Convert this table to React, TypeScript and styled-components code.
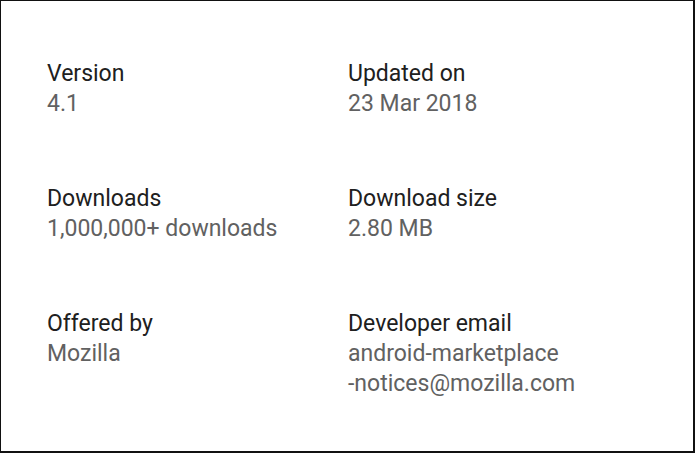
import React from "react";
import styled, { createGlobalStyle } from "styled-components";

const Global = createGlobalStyle`
  html, body { margin: 0; padding: 0; background: #ffffff; }
  body { font-family: Roboto, "Noto Sans", sans-serif; }
`;

const Frame = styled.div`
  box-sizing: border-box;
  width: 695px;
  height: 453px;
  border-style: solid;
  border-color: #111;
  border-width: 1px 2px 2px 1px;
  background: #fff;
  padding: 58px 0 0 46px;
`;

const Grid = styled.div`
  display: grid;
  grid-template-columns: 301px 1fr;
  row-gap: 65px;
`;

const Item = styled.div`
  display: flex;
  flex-direction: column;
`;

const Label = styled.div`
  font-size: 23px;
  line-height: 30px;
  color: #202020;
`;

const Value = styled.div`
  font-size: 23px;
  line-height: 30px;
  color: #616161;
`;

const items: { label: string; value: string[] }[] = [
  { label: "Version", value: ["4.1"] },
  { label: "Updated on", value: ["23 Mar 2018"] },
  { label: "Downloads", value: ["1,000,000+ downloads"] },
  { label: "Download size", value: ["2.80 MB"] },
  { label: "Offered by", value: ["Mozilla"] },
  { label: "Developer email", value: ["android-marketplace", "-notices@mozilla.com"] },
];

export default function App() {
  return (
    <>
      <Global />
      <Frame>
        <Grid>
          {items.map((it) => (
            <Item key={it.label}>
              <Label>{it.label}</Label>
              {it.value.map((v) => (
                <Value key={v}>{v}</Value>
              ))}
            </Item>
          ))}
        </Grid>
      </Frame>
    </>
  );
}
